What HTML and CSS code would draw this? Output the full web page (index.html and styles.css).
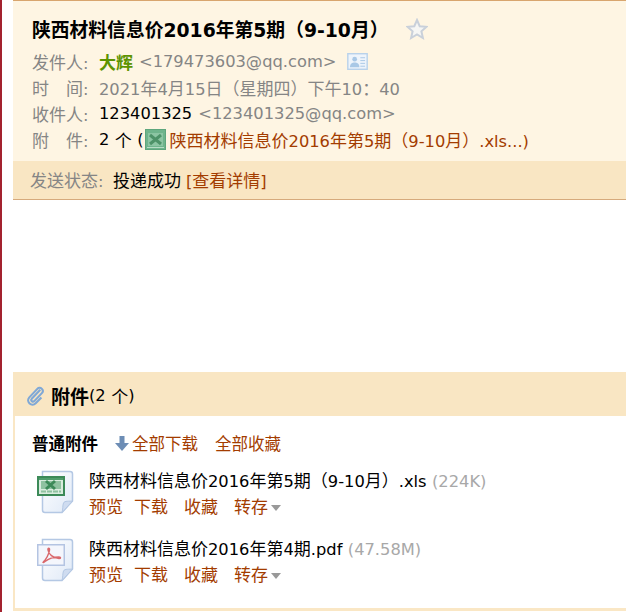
FILE: index.html
```html
<!DOCTYPE html>
<html lang="zh-CN">
<head>
    <meta charset="UTF-8">
    <title>陕西材料信息价2016年第5期</title>
    <link rel="stylesheet" href="styles.css">
</head>
<body>
    <svg class="defs" width="0" height="0">
        <defs>
            <linearGradient id="pageFill" x1="0" y1="0" x2="1" y2="1">
                <stop offset="0" stop-color="#ffffff"/>
                <stop offset="1" stop-color="#dfe9f7"/>
            </linearGradient>
            <symbol id="filePage" viewBox="0 0 40 44">
                <path d="M5.500 1.500H33a2.500 2.500 0 0 1 2.500 2.500V31L25 42.500H8A2.500 2.500 0 0 1 5.500 40Z" fill="url(#pageFill)" stroke="#b4c8e4" stroke-width="1.500"/>
                <path d="M35.500 31 25 42.500c1-3 .5-7 1.500-9.500s6-1.500 9-2Z" fill="#cfdcf0" stroke="#b4c8e4"/>
            </symbol>
            <symbol id="xlsBadge" viewBox="0 0 28 20">
                <rect x="1" y="1" width="26" height="18" fill="#d9ecde" stroke="#3c8a58" stroke-width="2"/>
                <rect x="2" y="2" width="24" height="2" fill="#4f9d6c"/>
                <rect x="4" y="5" width="20" height="8" fill="#8fc2a0"/>
                <path d="M9 5 18 13M18 5 9 13" stroke="#3c8a58" stroke-width="3"/>
                <path d="M4 15.500H24" stroke="#8fc2a0" stroke-width="2" stroke-dasharray="5 1"/>
            </symbol>
        </defs>
    </svg>

    <div class="main">
        <div class="mail-head">
            <div class="head-info">
                <h1 class="subject"><span>陕西材料信息价2016年第5期（9-10月）</span><svg class="star" viewBox="0 0 22 22" width="22" height="22"><path d="M11 2l2.700 6.200 6.800.6-5.100 4.500 1.500 6.700L11 16.500 5.100 20l1.500-6.700L1.500 8.800l6.800-.6Z" fill="#f6f6f4" stroke="#c9d0da" stroke-width="2"/></svg></h1>
                <div class="info-row">
                    <span class="label">发件人<span class="en">:</span></span>
                    <b class="sender">大辉</b>
                    <span class="en addr">&lt;179473603@qq.com&gt;</span>
                    <svg class="card" viewBox="0 0 22 18" width="21" height="17">
                        <rect x=".75" y=".75" width="20.500" height="16.500" fill="#eef4fb" stroke="#b9d2ea" stroke-width="1.500"/>
                        <circle cx="8" cy="6.500" r="2.500" fill="#a9c8e6"/>
                        <path d="M3 15c0-4 2.500-5 5-5s5 1 5 5Z" fill="#a9c8e6"/>
                        <path d="M14 5h5M14 8h5M14 11h5M14 14h5" stroke="#a9c8e6"/>
                    </svg>
                </div>
                <div class="info-row">
                    <span class="label">时　间<span class="en">:</span></span>
                    <span class="muted"><span class="en">2021</span>年<span class="en">4</span>月<span class="en">15</span>日（星期四）下午<span class="en">10</span>：<span class="en">40</span></span>
                </div>
                <div class="info-row">
                    <span class="label">收件人<span class="en">:</span></span>
                    <span class="en">123401325</span>
                    <span class="en addr">&lt;123401325@qq.com&gt;</span>
                </div>
                <div class="info-row">
                    <span class="label">附　件<span class="en">:</span></span>
                    <span class="en">2</span>&nbsp;个 <span class="en paren">(</span>
                    <svg class="xls-small" viewBox="0 0 21 21" width="21" height="21">
                        <rect x=".5" y=".5" width="20" height="20" fill="#6fb48c" stroke="#5ea67d"/>
                        <rect x="3" y="4" width="15" height="13" fill="#8cc5a3"/>
                        <path d="M5 6 16 15M16 6 5 15" stroke="#4d9268" stroke-width="3"/>
                        <path d="M2 18.500H19" stroke="#b8dcc6"/>
                    </svg>
                    <a class="link" href="#">陕西材料信息价<span class="en">2016</span>年第<span class="en">5</span>期（<span class="en">9-10</span>月）<span class="en">.xls...)</span></a>
                </div>
            </div>
            <div class="status-bar">
                <span class="status-label">发送状态<span class="en">:</span></span>
                <span>投递成功</span>
                <a class="link details" href="#"><span class="en">[</span>查看详情<span class="en">]</span></a>
            </div>
        </div>

        <div class="attach">
            <div class="attach-title">
                <svg class="clip" viewBox="0 0 20 22" width="19" height="21">
                    <path d="M15 5 6 14.500c-1.500 1.700 1 4 2.700 2.400l8-8.400c3-3.200-1.800-7.700-4.800-4.500L3.500 13c-4 4.500 2.500 10.500 6.700 6.200l6-6.200" fill="none" stroke="#7fa8d6" stroke-width="2.200"/>
                </svg>
                <b class="title-text">附件</b><span class="en">(2</span>&nbsp;个<span class="en">)</span>
            </div>
            <div class="attach-body">
                <div class="attach-bar">
                    <b>普通附件</b>
                    <svg class="arrow" viewBox="0 0 14 15" width="14" height="15"><path d="M4.500 0h5v7H14l-7 8-7-8h4.500Z" fill="#6d8db5"/></svg>
                    <a class="link" href="#">全部下载</a>
                    <a class="link bar-gap" href="#">全部收藏</a>
                </div>

                <div class="file-row">
                    <div class="file-icon">
                        <svg class="page" width="40" height="44"><use href="#filePage"/></svg>
                        <svg class="badge" width="28" height="20"><use href="#xlsBadge"/></svg>
                    </div>
                    <div class="file-info">
                        <div>陕西材料信息价<span class="en">2016</span>年第<span class="en">5</span>期（<span class="en">9-10</span>月）<span class="en">.xls</span> <span class="en size">(224K)</span></div>
                        <div class="file-ops">
                            <a class="link" href="#">预览</a>
                            <a class="link" href="#">下载</a>
                            <a class="link" href="#">收藏</a>
                            <a class="link more" href="#">转存<i class="caret"></i></a>
                        </div>
                    </div>
                </div>

                <div class="file-row">
                    <div class="file-icon">
                        <svg class="page" width="40" height="44"><use href="#filePage"/></svg>
                        <svg class="badge" viewBox="0 0 28 22" width="28" height="22">
                            <rect x=".75" y=".75" width="26.500" height="20.500" fill="#f4f6fc" stroke="#b4c4e2" stroke-width="1.500"/>
                            <path d="M6 18c3-2 6-8 6.500-12 .2-2.500-1.800-2.500-1.500 0 .5 4 5 8 11 8.500 2 0 2-1.500 0-1.500-5 0-11 2-14 4.500-1.500 1-2 1.500-2 .5" fill="none" stroke="#d9686c" stroke-width="1.500"/>
                        </svg>
                    </div>
                    <div class="file-info">
                        <div>陕西材料信息价<span class="en">2016</span>年第<span class="en">4</span>期<span class="en">.pdf</span> <span class="en size">(47.58M)</span></div>
                        <div class="file-ops">
                            <a class="link" href="#">预览</a>
                            <a class="link" href="#">下载</a>
                            <a class="link" href="#">收藏</a>
                            <a class="link more" href="#">转存<i class="caret"></i></a>
                        </div>
                    </div>
                </div>
            </div>
        </div>
    </div>
</body>
</html>
```

FILE: styles.css
```css
html, body {
    height: 100%;
}
body {
    margin: 0;
    border-left: 2px solid #a3222f;
    background-color: #fff;
    color: #000;
    font-family: "DejaVu Sans", "Noto Sans CJK SC", sans-serif;
    font-size: 17px;
    overflow: hidden;
}
a {
    text-decoration: none;
}
.defs {
    display: block;
    height: 0;
}
.main {
    margin-left: 11px;
}
.en {
    font-size: 16.3px;
}
.link {
    color: #a33c00;
}
.muted, .addr, .label, .status-label {
    color: #858585;
}

/* mail header */
.mail-head {
    border-top: 1px solid #d8a56e;
    border-bottom: 1px solid #d6aa7c;
    background-color: #fef5e3;
}
.head-info {
    height: 160px;
    padding-left: 19px;
}
.subject {
    display: flex;
    align-items: center;
    height: 27px;
    margin: 0;
    padding-top: 14px;
    font-size: 18.8px;
    font-weight: bold;
    white-space: pre;
}
.star {
    margin-left: 17px;
}
.info-row {
    display: flex;
    align-items: center;
    height: 26.2px;
    white-space: pre;
}
.subject + .info-row {
    margin-top: 6px;
}
.label {
    width: 67px;
}
.sender {
    color: #5c9300;
}
.sender + .addr {
    margin-left: 6px;
}
.en + .addr {
    margin-left: 6px;
}
.card {
    margin-left: 11px;
}
.xls-small {
    margin: 0 4px 0 1px;
}
.status-bar {
    display: flex;
    align-items: center;
    box-sizing: border-box;
    height: 38px;
    padding: 0 0 2px 17px;
    background-color: #f9e6c3;
    white-space: pre;
}
.status-label {
    width: 83px;
}
.details {
    margin-left: 5px;
}

/* attachments */
.attach {
    margin-top: 172px;
}
.attach-title {
    display: flex;
    align-items: center;
    height: 44px;
    padding: 2px 0 0 13px;
    box-sizing: border-box;
    background-color: #f9e6c3;
    white-space: pre;
}
.clip {
    margin-right: 6px;
}
.title-text {
    font-size: 19px;
}
.attach-body {
    height: 179px;
    padding: 13px 0 0 17px;
    border-left: 2px solid #fae7c5;
    border-bottom: 3px solid #fae7c5;
}
.attach-bar {
    display: flex;
    align-items: center;
    height: 28px;
    font-size: 16.5px;
    white-space: pre;
}
.arrow {
    margin: 0 3px 0 17px;
}
.bar-gap {
    margin-left: 17px;
}
.file-row {
    display: flex;
    height: 68px;
}
.attach-bar + .file-row {
    margin-top: 10px;
}
.file-icon {
    position: relative;
    width: 57px;
    height: 44px;
    margin-top: 3px;
}
.page {
    position: absolute;
    left: 5px;
    top: 0;
}
.badge {
    position: absolute;
    left: 5px;
    top: 6px;
}
.file-info {
    padding-top: 1px;
    line-height: 26px;
}
.file-ops {
    display: flex;
    gap: 16px;
    margin-top: -1px;
}
.file-ops .link:nth-child(2) {
    margin-left: -5px;
}
.size {
    color: #a8a8a8;
}
.caret {
    display: inline-block;
    width: 0;
    height: 0;
    margin: 0 0 2px 3px;
    border-top: 6px solid #999;
    border-left: 5px solid transparent;
    border-right: 5px solid transparent;
}
```
